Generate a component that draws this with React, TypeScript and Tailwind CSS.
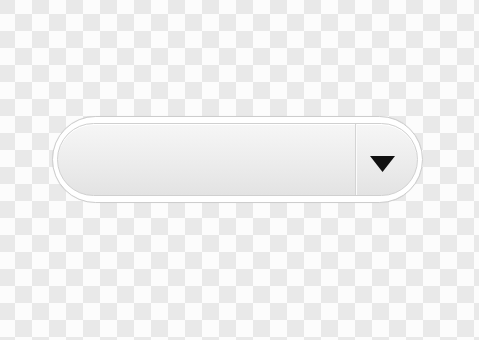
export default function App() {
  return (
    <div className="w-[479px] h-[340px] overflow-hidden bg-[conic-gradient(#fcfcfc_25%,#e9e9e9_0_50%,#fcfcfc_0_75%,#e9e9e9_0)] bg-[length:34px_34px] bg-[position:-2px_-3px] pt-[116px] pl-[52px]">
      {/* select pill */}
      <div className="flex w-[371px] h-[87px] rounded-full border border-[#cdcdcd] bg-white px-[4px] py-[6px] shadow-[0_0_1px_rgba(0,0,0,0.08)]">
        <div className="flex flex-1 rounded-full border border-[#d0d0d0] bg-gradient-to-b from-[#f6f6f6] via-[#ededed] to-[#e3e3e3] shadow-[inset_0_1px_0_#ffffff]">
          <div className="flex-1" />
          <div className="flex h-full">
            <div className="w-px h-full bg-[#d4d4d4]" />
            <div className="w-px h-full bg-[#fbfbfb]" />
          </div>
          <div className="flex w-[60px] items-center pl-[13px] pt-[8px]">
            <svg width="25" height="16" viewBox="0 0 25 16">
              <polygon points="0,0 25,0 12.5,16" fill="#111111" />
            </svg>
          </div>
        </div>
      </div>
    </div>
  )
}
